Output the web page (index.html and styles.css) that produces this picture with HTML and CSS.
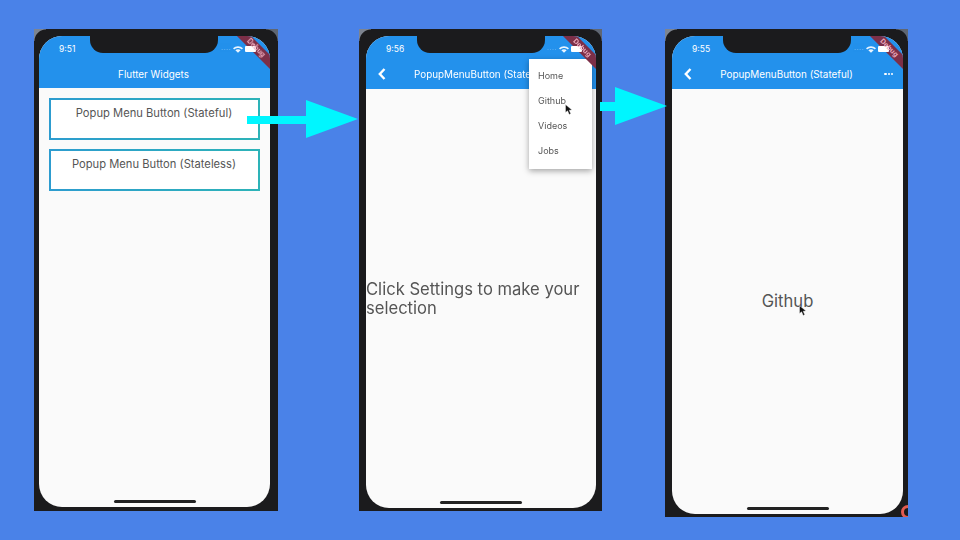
FILE: index.html
```html
<!DOCTYPE html>
<html>
<head>
  <title>Flutter Popup Menu Button</title>
  <link rel="stylesheet" href="styles.css">
</head>
<body>
  <div class="phones">

    <div class="phone phone-one">
      <div class="screen">
        <div class="notch"></div>
        <div class="ribbon"></div>
        <div class="appbar">
          <div class="status">
            <span>9:51</span>
            <div class="status-icons">
              <span class="signal">....</span>
              <svg class="wifi" viewBox="0 0 12 8"><path d="M0 2.6 C3.3 -0.6 8.7 -0.6 12 2.6 L10.6 4 C8 1.6 4 1.6 1.4 4 Z M2.8 5 C4.6 3.4 7.4 3.4 9.2 5 L6 8 Z"/></svg>
              <span class="battery"></span>
            </div>
          </div>
          <div class="bar">
            <span></span>
            <span class="title">Flutter Widgets</span>
            <span></span>
          </div>
        </div>
        <div class="content list">
          <div class="card">Popup Menu Button (Stateful)</div>
          <div class="card">Popup Menu Button (Stateless)</div>
        </div>
        <div class="ribbon-label">Debug</div>
        <div class="home-bar"></div>
      </div>
    </div>

    <div class="phone phone-two">
      <div class="screen">
        <div class="notch"></div>
        <div class="ribbon"></div>
        <div class="appbar">
          <div class="status">
            <span>9:56</span>
            <div class="status-icons">
              <span class="signal">....</span>
              <svg class="wifi" viewBox="0 0 12 8"><path d="M0 2.6 C3.3 -0.6 8.7 -0.6 12 2.6 L10.6 4 C8 1.6 4 1.6 1.4 4 Z M2.8 5 C4.6 3.4 7.4 3.4 9.2 5 L6 8 Z"/></svg>
              <span class="battery"></span>
            </div>
          </div>
          <div class="bar bar-cut">
            <svg class="back" viewBox="0 0 8 12"><path d="M6.5 1 L1.8 6 L6.5 11"/></svg>
            <span class="title">PopupMenuButton (Stateful)</span>
          </div>
        </div>
        <div class="content center">
          <p class="message">Click Settings to make your selection</p>
        </div>
        <div class="menu">
          <div>Home</div>
          <div>Github</div>
          <div>Videos</div>
          <div>Jobs</div>
        </div>
        <div class="ribbon-label">Debug</div>
        <svg class="cursor cursor-menu" viewBox="0 0 8 12"><path d="M0.5 0.5 L0.5 8.5 L2.6 6.8 L4.2 10.5 L5.8 9.8 L4.2 6.2 L7 6 Z"/></svg>
        <div class="home-bar"></div>
      </div>
    </div>

    <div class="phone phone-three">
      <div class="screen">
        <div class="notch"></div>
        <div class="ribbon"></div>
        <div class="appbar">
          <div class="status">
            <span>9:55</span>
            <div class="status-icons">
              <span class="signal">....</span>
              <svg class="wifi" viewBox="0 0 12 8"><path d="M0 2.6 C3.3 -0.6 8.7 -0.6 12 2.6 L10.6 4 C8 1.6 4 1.6 1.4 4 Z M2.8 5 C4.6 3.4 7.4 3.4 9.2 5 L6 8 Z"/></svg>
              <span class="battery"></span>
            </div>
          </div>
          <div class="bar">
            <svg class="back" viewBox="0 0 8 12"><path d="M6.5 1 L1.8 6 L6.5 11"/></svg>
            <span class="title">PopupMenuButton (Stateful)</span>
            <span class="more"><i></i><i></i><i></i></span>
          </div>
        </div>
        <div class="content center">
          <p class="message">Github</p>
        </div>
        <div class="ribbon-label">Debug</div>
        <svg class="cursor cursor-text" viewBox="0 0 8 12"><path d="M0.5 0.5 L0.5 8.5 L2.6 6.8 L4.2 10.5 L5.8 9.8 L4.2 6.2 L7 6 Z"/></svg>
        <div class="home-bar"></div>
      </div>
      <div class="record-dot"></div>
    </div>

    <svg class="arrow arrow-one" viewBox="0 0 111 38"><path d="M0 16 H59 V0 L111 19 L59 38 V24 H0 Z"/></svg>
    <svg class="arrow arrow-two" viewBox="0 0 67 38"><path d="M0 15 H15 V0 L67 19 L15 38 V24 H0 Z"/></svg>
  </div>
</body>
</html>
```

FILE: styles.css
```css
* { box-sizing: border-box; }

body {
  margin: 0;
  height: 540px;
  overflow: hidden;
  background: #4a82e8;
  font-family: Inter, "Liberation Sans", sans-serif;
}

.phones {
  position: relative;
  display: flex;
  align-items: flex-start;
  height: 540px;
  padding: 29px 0 0 34px;
  filter: blur(0.5px);
}

.phone {
  position: relative;
  display: flex;
  width: 243px;
  height: 482px;
  overflow: hidden;
  background:
    radial-gradient(circle at 100% 100%, #1b1b1d 11px, #7d8490 12px) 0 0 / 12px 12px no-repeat,
    radial-gradient(circle at 0 100%, #1b1b1d 11px, #5f6672 12px) 100% 0 / 12px 12px no-repeat,
    #1b1b1d;
}
.phone-one { width: 244px; padding: 7px 8px 4px 5px; }
.phone-two { margin-left: 81px; padding: 7px 6px 3px 7px; }
.phone-three { margin-left: 63px; height: 488px; padding: 7px 5px 3px 7px; }

.screen {
  position: relative;
  display: flex;
  flex-direction: column;
  flex: 1;
  overflow: hidden;
  background: #fafafa;
  border-radius: 23px;
}

.notch {
  position: absolute;
  top: 0;
  left: 51px;
  width: 128px;
  height: 17px;
  background: #1b1b1d;
  border-radius: 0 0 13px 13px;
}

.ribbon, .ribbon-label {
  position: absolute;
  top: 7px;
  right: -16px;
  width: 60px;
  height: 10px;
  transform: rotate(45deg);
}
.ribbon { z-index: 1; background: #7c2f48; }
.ribbon-label {
  z-index: 3;
  color: #eba9bb;
  font-size: 7px;
  font-weight: 700;
  line-height: 10px;
  text-align: center;
}

.appbar {
  flex: 0 0 53px;
  background: #2391ec;
  color: white;
}
.phone-one .appbar { flex-basis: 52px; }

.status {
  display: flex;
  align-items: center;
  justify-content: space-between;
  height: 26px;
  padding: 0 14px 0 20px;
  font-size: 8.5px;
}
.status-icons { display: flex; align-items: center; gap: 2px; }
.signal { font-size: 7px; opacity: 0.35; letter-spacing: 0.5px; margin-top: -3px; }
.wifi { width: 10px; height: 7px; fill: #e8f4ff; }
.battery { position: relative; z-index: 2; width: 11px; height: 6px; background: white; border-radius: 1px; }

.bar {
  display: grid;
  grid-template-columns: 1fr auto 1fr;
  align-items: center;
  height: 26px;
  padding: 0 14px 2px 12px;
}
.bar-cut { grid-template-columns: 36px 1fr; padding-right: 67px; }
.bar-cut .title { overflow: hidden; white-space: nowrap; }
.title { font-size: 9.9px; font-weight: 400; }
.back { width: 8px; height: 12px; fill: none; stroke: white; stroke-width: 2.4; }
.more { display: flex; justify-self: end; gap: 1px; margin-right: -4px; }
.more i { width: 2.2px; height: 2.2px; background: white; border-radius: 50%; }

.content { flex: 1; }
.list {
  display: flex;
  flex-direction: column;
  gap: 9px;
  padding: 10px 10px 0;
}
.center { display: flex; align-items: center; justify-content: center; }

.card {
  height: 42px;
  padding: 6px 1px 0 0;
  background: white;
  border: 2px solid;
  border-image: linear-gradient(90deg, #2d9ccf, #2db3b8) 1;
  color: #555;
  font-size: 11.2px;
  text-align: center;
}

.message {
  margin: 0;
  color: #555;
  font-size: 16.6px;
  line-height: 19px;
}
.phone-two .message { padding-top: 1px; }

.menu {
  position: absolute;
  top: 23px;
  right: 4px;
  width: 63px;
  height: 110px;
  padding: 3.5px 0 0 9px;
  background: white;
  box-shadow: 0 2px 6px rgba(0, 0, 0, 0.35);
  color: #555;
  font-size: 9px;
}
.menu div { height: 25.3px; line-height: 25.3px; }

.cursor { position: absolute; width: 8px; height: 12px; fill: #111; stroke: white; stroke-width: 0.4; }
.cursor-menu { top: 68px; left: 199px; }
.cursor-text { top: 269px; left: 127px; }

.home-bar {
  position: absolute;
  bottom: 4px;
  left: 50%;
  width: 82px;
  height: 3px;
  margin-left: -41px;
  background: #222;
  border-radius: 2px;
}

.record-dot {
  position: absolute;
  right: -7px;
  bottom: -2px;
  width: 14px;
  height: 14px;
  border: 3px solid #e25b52;
  border-radius: 50%;
}

.arrow { position: absolute; fill: #00f6ff; }
.arrow-one { top: 100px; left: 247px; width: 111px; height: 38px; }
.arrow-two { top: 87px; left: 600px; width: 67px; height: 38px; }
```
